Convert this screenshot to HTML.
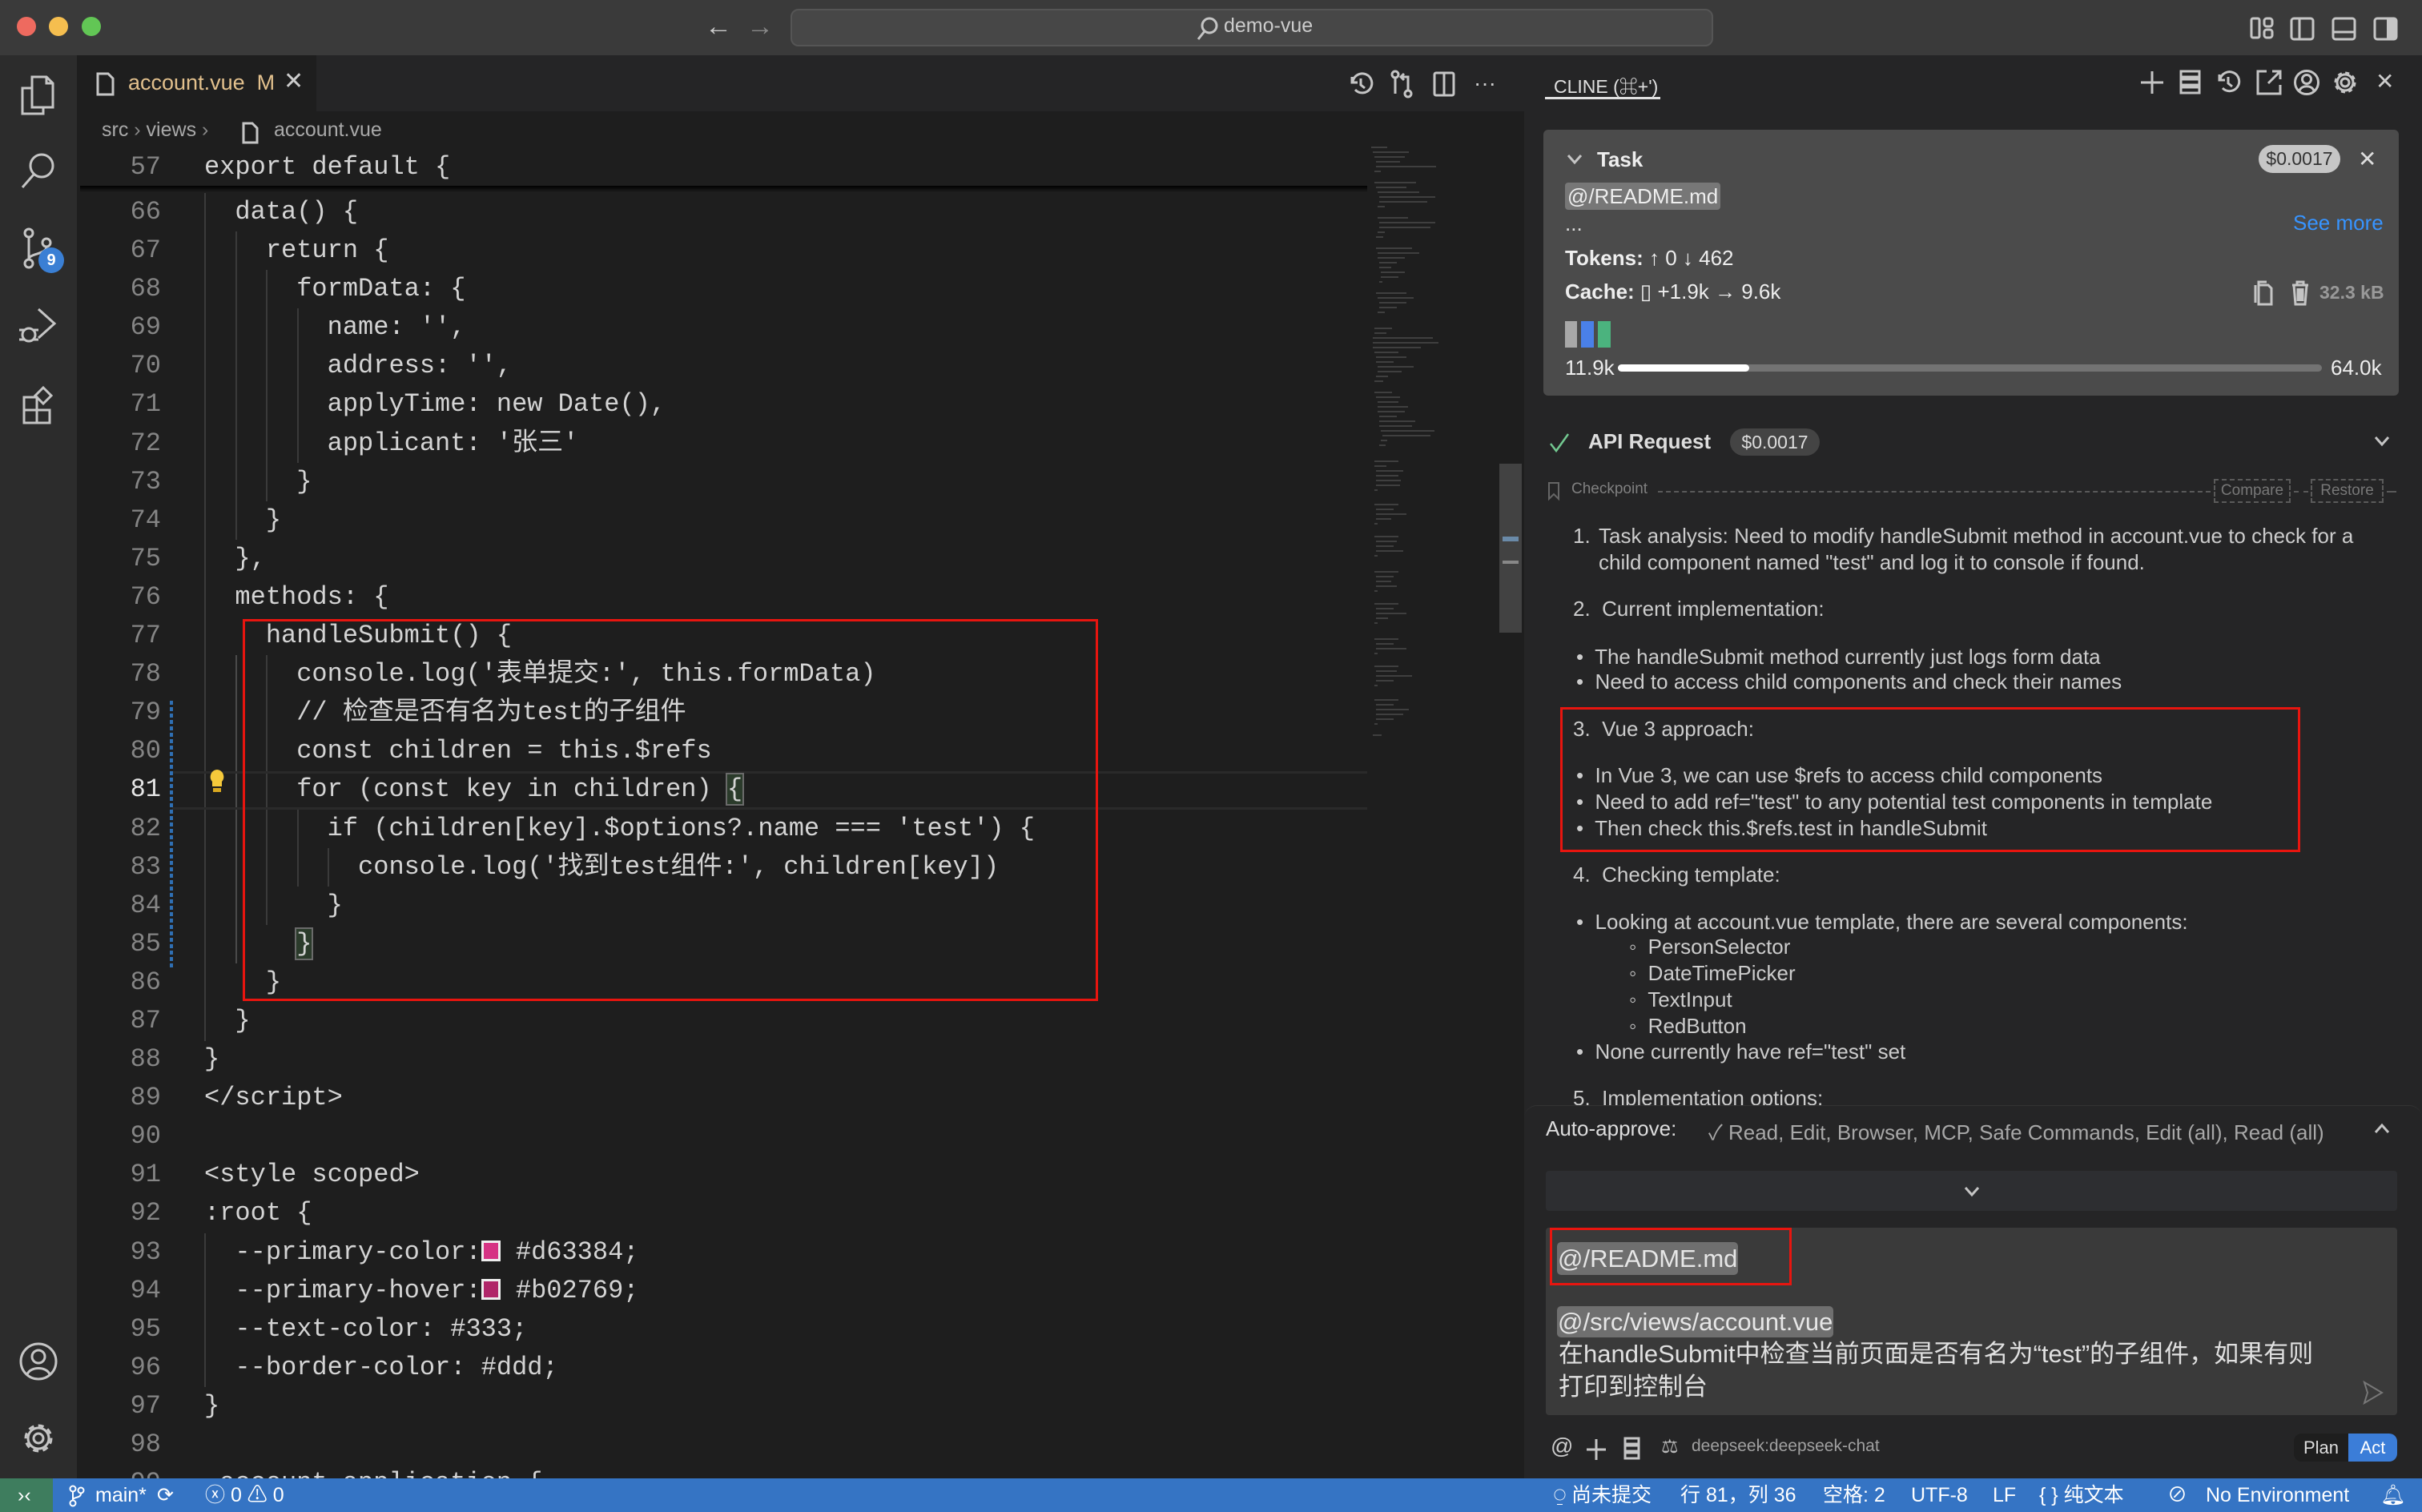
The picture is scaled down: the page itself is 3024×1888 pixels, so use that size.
<!DOCTYPE html>
<html><head><meta charset="utf-8">
<style>
*{margin:0;padding:0;box-sizing:border-box}
body{width:3024px;height:1888px;background:#1e1e1e;position:relative;overflow:hidden;font-family:"Liberation Sans","Noto Sans CJK SC",sans-serif;color:#ccc}
.a{position:absolute}
.code{font-family:"Liberation Mono","Noto Sans CJK SC",monospace;font-size:32px;color:#d4d4d4;white-space:pre;line-height:48.1px}
.ln{position:absolute;left:110px;width:91px;text-align:right;font-family:"Liberation Mono",monospace;font-size:32px;color:#858585;line-height:48.1px}
.guide{position:absolute;width:2px;background:#3a3a3a}
svg{position:absolute;overflow:visible}
.ic{stroke:#c5c5c5;fill:none;stroke-width:3}
.t26{font-size:26px;line-height:33px;color:#cccccc;position:absolute;white-space:nowrap}
.sb{position:absolute;top:1846px;height:42px;line-height:42px;font-size:25px;color:#fff;white-space:nowrap}
.mm{position:absolute;height:2px;background:#5a5a5a}
</style></head><body>

<!-- title bar -->
<div class="a" style="left:0;top:0;width:3024px;height:69px;background:#3a3a3a"></div>
<div class="a" style="left:21px;top:21px;width:24px;height:24px;border-radius:50%;background:#ee6a5f"></div>
<div class="a" style="left:61px;top:21px;width:24px;height:24px;border-radius:50%;background:#f5be4f"></div>
<div class="a" style="left:102px;top:21px;width:24px;height:24px;border-radius:50%;background:#62c655"></div>
<div class="a" style="left:880px;top:14px;font-size:34px;color:#ccc">←</div>
<div class="a" style="left:932px;top:14px;font-size:34px;color:#888">→</div>
<div class="a" style="left:987px;top:11px;width:1152px;height:47px;border:2px solid #555;border-radius:10px;background:#474747"></div>
<svg style="left:1492px;top:20px" width="30" height="30"><circle cx="18" cy="12" r="9" class="ic" stroke-width="2.5"/><path d="M12 19 L4 29" class="ic" stroke-width="2.5"/></svg>
<div class="a" style="left:1528px;top:18px;font-size:25px;color:#ccc">demo-vue</div>
<svg style="left:2810px;top:22px" width="30" height="28"><rect x="1" y="1" width="10" height="24" rx="2" class="ic" stroke-width="2.5"/><rect x="17" y="1" width="10" height="10" rx="3" class="ic" stroke-width="2.5"/><rect x="17" y="15" width="10" height="10" rx="3" class="ic" stroke-width="2.5"/></svg>
<svg style="left:2860px;top:22px" width="30" height="28"><rect x="1" y="1" width="27" height="26" rx="3" class="ic" stroke-width="2.5"/><path d="M11 1v26" class="ic" stroke-width="2.5"/></svg>
<svg style="left:2912px;top:22px" width="30" height="28"><rect x="1" y="1" width="27" height="26" rx="3" class="ic" stroke-width="2.5"/><path d="M1 18h27" class="ic" stroke-width="2.5"/></svg>
<svg style="left:2964px;top:22px" width="30" height="28"><rect x="1" y="1" width="27" height="26" rx="3" class="ic" stroke-width="2.5"/><rect x="16" y="1" width="12" height="26" fill="#c5c5c5"/></svg>

<!-- activity bar -->
<div class="a" style="left:0;top:69px;width:96px;height:1777px;background:#2c2c2c"></div>
<svg style="left:26px;top:94px" width="44" height="50"><path d="M14 2h18l8 8v30H14z M32 2v8h8 M14 16H2v32h26v-8" class="ic"/></svg>
<svg style="left:26px;top:190px" width="44" height="46"><circle cx="26" cy="17" r="14" class="ic"/><path d="M16 28 L2 44" class="ic"/></svg>
<svg style="left:28px;top:285px" width="44" height="50"><circle cx="8" cy="6" r="5" class="ic"/><circle cx="8" cy="44" r="5" class="ic"/><circle cx="30" cy="18" r="5" class="ic"/><path d="M8 11v28 M30 23c0 10-22 8-22 16" class="ic"/></svg>
<div class="a" style="left:48px;top:309px;width:32px;height:32px;border-radius:50%;background:#3a7fd4;color:#fff;font-size:20px;font-weight:bold;text-align:center;line-height:32px">9</div>
<svg style="left:22px;top:382px" width="50" height="50"><path d="M26 4 L46 22 L26 40" class="ic"/><circle cx="14" cy="36" r="8" class="ic"/><path d="M2 30h6 M2 42h6 M20 30h6 M20 42h6" class="ic"/></svg>
<svg style="left:28px;top:482px" width="44" height="46"><path d="M2 14h16v16H2z M2 30h16v16H2z M18 30h16v16H18z M26 2l10 10-10 10-10-10z" class="ic"/></svg>
<svg style="left:24px;top:1676px" width="50" height="50"><circle cx="24" cy="24" r="22" class="ic"/><circle cx="24" cy="18" r="8" class="ic"/><path d="M10 40c4-10 24-10 28 0" class="ic"/></svg>
<svg style="left:26px;top:1774px" width="46" height="46"><circle cx="22" cy="22" r="6" class="ic"/><circle cx="22" cy="22" r="16" class="ic" stroke-width="7" stroke-dasharray="7 5.5"/><circle cx="22" cy="22" r="13" class="ic"/></svg>

<!-- editor tab bar -->
<div class="a" style="left:96px;top:69px;width:1807px;height:70px;background:#252526"></div>
<div class="a" style="left:96px;top:69px;width:299px;height:70px;background:#1e1e1e"></div>
<svg style="left:120px;top:90px" width="24" height="30"><path d="M2 2h13l6 6v20H2z" class="ic" stroke-width="2.5"/></svg>
<div class="a" style="left:160px;top:88px;font-size:27px;color:#e2c08d">account.vue&nbsp; M</div>
<div class="a" style="left:354px;top:84px;font-size:30px;color:#ccc">✕</div>
<svg style="left:1684px;top:90px" width="30" height="30"><path d="M4 6v7h7" class="ic" stroke-width="2.5"/><path d="M5 12a12 12 0 1 1 3 10" class="ic" stroke-width="2.5"/><path d="M15 8v8l5 4" class="ic" stroke-width="2.5"/></svg>
<svg style="left:1736px;top:88px" width="30" height="34"><circle cx="6" cy="5" r="4" class="ic" stroke-width="2.5"/><circle cx="22" cy="29" r="4" class="ic" stroke-width="2.5"/><path d="M6 9v20 M22 25V8h-8 M17 4l-4 4 4 4" class="ic" stroke-width="2.5"/></svg>
<svg style="left:1790px;top:90px" width="28" height="30"><rect x="1" y="1" width="24" height="28" rx="2" class="ic" stroke-width="2.5"/><path d="M13 1v28" class="ic" stroke-width="2.5"/></svg>
<div class="a" style="left:1840px;top:88px;font-size:28px;color:#ccc">···</div>

<!-- breadcrumb -->
<div class="a" style="left:127px;top:148px;font-size:25px;color:#a9a9a9">src <span style="color:#888">›</span> views <span style="color:#888">›</span></div>
<svg style="left:302px;top:152px" width="22" height="28"><path d="M2 2h11l6 6v18H2z" class="ic" stroke-width="2.3"/></svg>
<div class="a" style="left:342px;top:148px;font-size:25px;color:#a9a9a9">account.vue</div>

<!-- sticky line -->
<div class="ln" style="top:185px">57</div>
<div class="a code" style="left:255px;top:185px">export default {</div>
<div class="a" style="left:100px;top:232px;width:1607px;height:8px;background:linear-gradient(#000,rgba(0,0,0,0))"></div>

<!-- indent guides -->
<div class="guide" style="left:255px;top:241px;height:1059px"></div>
<div class="guide" style="left:294px;top:289px;height:385px"></div>
<div class="guide" style="left:332px;top:337px;height:289px"></div>
<div class="guide" style="left:371px;top:385px;height:193px"></div>
<div class="guide" style="left:294px;top:818px;height:385px;background:#4a4a4a"></div>
<div class="guide" style="left:332px;top:818px;height:337px"></div>
<div class="guide" style="left:371px;top:1011px;height:96px"></div>
<div class="guide" style="left:409px;top:1059px;height:48px"></div>
<div class="guide" style="left:255px;top:1540px;height:192px"></div>

<!-- current line -->
<div class="a" style="left:215px;top:963px;width:1492px;height:48px;border-top:3px solid #2a2a2a;border-bottom:3px solid #2a2a2a"></div>

<!-- line numbers -->
<div class="ln" style="top:241px">66<br>67<br>68<br>69<br>70<br>71<br>72<br>73<br>74<br>75<br>76<br>77<br>78<br>79<br>80<br><span style="color:#e6e6e6">81</span><br>82<br>83<br>84<br>85<br>86<br>87<br>88<br>89<br>90<br>91<br>92<br>93<br>94<br>95<br>96<br>97<br>98<br>99</div>
<div class="a" style="left:212px;top:875px;width:4px;height:336px;background:repeating-linear-gradient(#2f6fb3 0 5px,transparent 5px 8px)"></div>
<svg style="left:260px;top:959px" width="22" height="34"><path d="M11 2a9 9 0 0 0-6 15v6h12v-6a9 9 0 0 0-6-15z" fill="#f5c93b"/><rect x="6" y="25" width="10" height="5" fill="#d8a820"/></svg>

<div class="a code" style="left:255px;top:241px">  data() {
    return {
      formData: {
        name: '',
        address: '',
        applyTime: new Date(),
        applicant: '张三'
      }
    }
  },
  methods: {
    handleSubmit() {
      console.log('表单提交:', this.formData)
      // 检查是否有名为test的子组件
      const children = this.$refs
      for (const key in children) <span style="outline:2px solid #6a6a6a;background:#2b3b2b">{</span>
        if (children[key].$options?.name === 'test') {
          console.log('找到test组件:', children[key])
        }
      <span style="outline:2px solid #6a6a6a;background:#2b3b2b">}</span>
    }
  }
}
&lt;/script&gt;

&lt;style scoped&gt;
:root {
  --primary-color:<span style="display:inline-block;width:24px;height:26px;background:#d63384;border:3px solid #eee;vertical-align:-3px"></span> #d63384;
  --primary-hover:<span style="display:inline-block;width:24px;height:26px;background:#b02769;border:3px solid #eee;vertical-align:-3px"></span> #b02769;
  --text-color: #333;
  --border-color: #ddd;
}

.account-application {</div>

<!-- red box editor -->
<div class="a" style="left:303px;top:773px;width:1068px;height:477px;border:3px solid #e8150f"></div>

<!-- minimap -->
<div class="a" style="left:1712px;top:183px;width:140px;height:940px;opacity:.55">
 <div class="mm" style="left:0;top:0;width:20px"></div><div class="mm" style="left:2px;top:6px;width:45px"></div><div class="mm" style="left:4px;top:12px;width:38px"></div><div class="mm" style="left:6px;top:18px;width:30px"></div><div class="mm" style="left:6px;top:24px;width:75px"></div><div class="mm" style="left:4px;top:30px;width:8px"></div>
 <div class="mm" style="left:4px;top:44px;width:52px"></div><div class="mm" style="left:6px;top:50px;width:38px"></div><div class="mm" style="left:8px;top:56px;width:52px"></div><div class="mm" style="left:10px;top:62px;width:70px"></div><div class="mm" style="left:10px;top:68px;width:60px"></div><div class="mm" style="left:8px;top:74px;width:9px"></div>
 <div class="mm" style="left:8px;top:88px;width:38px"></div><div class="mm" style="left:10px;top:94px;width:70px"></div><div class="mm" style="left:10px;top:100px;width:64px"></div><div class="mm" style="left:8px;top:106px;width:9px"></div><div class="mm" style="left:6px;top:112px;width:9px"></div>
 <div class="mm" style="left:6px;top:126px;width:45px"></div><div class="mm" style="left:8px;top:132px;width:52px"></div><div class="mm" style="left:8px;top:138px;width:34px"></div><div class="mm" style="left:10px;top:144px;width:22px"></div><div class="mm" style="left:10px;top:150px;width:15px"></div><div class="mm" style="left:12px;top:156px;width:30px"></div><div class="mm" style="left:12px;top:162px;width:22px"></div><div class="mm" style="left:10px;top:168px;width:4px"></div>
 <div class="mm" style="left:6px;top:182px;width:38px"></div><div class="mm" style="left:8px;top:188px;width:45px"></div><div class="mm" style="left:10px;top:194px;width:34px"></div><div class="mm" style="left:10px;top:200px;width:22px"></div><div class="mm" style="left:8px;top:206px;width:9px"></div>
 <div class="mm" style="left:4px;top:226px;width:22px"></div><div class="mm" style="left:4px;top:232px;width:15px"></div><div class="mm" style="left:2px;top:238px;width:75px"></div><div class="mm" style="left:2px;top:244px;width:82px"></div><div class="mm" style="left:2px;top:250px;width:60px"></div><div class="mm" style="left:4px;top:256px;width:30px"></div><div class="mm" style="left:6px;top:262px;width:38px"></div><div class="mm" style="left:6px;top:268px;width:22px"></div><div class="mm" style="left:8px;top:274px;width:45px"></div><div class="mm" style="left:8px;top:280px;width:30px"></div><div class="mm" style="left:6px;top:286px;width:15px"></div><div class="mm" style="left:4px;top:292px;width:11px"></div>
 <div class="mm" style="left:4px;top:306px;width:22px"></div><div class="mm" style="left:6px;top:312px;width:30px"></div><div class="mm" style="left:8px;top:318px;width:26px"></div><div class="mm" style="left:8px;top:324px;width:38px"></div><div class="mm" style="left:8px;top:330px;width:34px"></div><div class="mm" style="left:10px;top:336px;width:22px"></div><div class="mm" style="left:10px;top:342px;width:45px"></div><div class="mm" style="left:10px;top:348px;width:41px"></div><div class="mm" style="left:12px;top:354px;width:67px"></div><div class="mm" style="left:14px;top:360px;width:60px"></div><div class="mm" style="left:12px;top:366px;width:8px"></div><div class="mm" style="left:10px;top:372px;width:8px"></div>
 <div class="mm" style="left:4px;top:392px;width:30px"></div><div class="mm" style="left:4px;top:398px;width:15px"></div><div class="mm" style="left:6px;top:404px;width:34px"></div><div class="mm" style="left:6px;top:410px;width:28px"></div><div class="mm" style="left:6px;top:416px;width:31px"></div><div class="mm" style="left:6px;top:422px;width:30px"></div><div class="mm" style="left:4px;top:428px;width:4px"></div>
 <div class="mm" style="left:4px;top:446px;width:30px"></div><div class="mm" style="left:6px;top:452px;width:22px"></div><div class="mm" style="left:6px;top:458px;width:38px"></div><div class="mm" style="left:6px;top:464px;width:19px"></div><div class="mm" style="left:4px;top:470px;width:4px"></div><div class="mm" style="left:4px;top:486px;width:30px"></div><div class="mm" style="left:6px;top:492px;width:26px"></div><div class="mm" style="left:6px;top:498px;width:22px"></div><div class="mm" style="left:6px;top:504px;width:34px"></div><div class="mm" style="left:4px;top:510px;width:4px"></div>
 <div class="mm" style="left:4px;top:530px;width:30px"></div><div class="mm" style="left:6px;top:536px;width:22px"></div><div class="mm" style="left:6px;top:542px;width:19px"></div><div class="mm" style="left:6px;top:548px;width:26px"></div><div class="mm" style="left:4px;top:554px;width:4px"></div><div class="mm" style="left:4px;top:570px;width:30px"></div><div class="mm" style="left:6px;top:576px;width:22px"></div><div class="mm" style="left:6px;top:582px;width:38px"></div><div class="mm" style="left:6px;top:588px;width:15px"></div><div class="mm" style="left:4px;top:594px;width:4px"></div>
 <div class="mm" style="left:4px;top:614px;width:30px"></div><div class="mm" style="left:6px;top:620px;width:22px"></div><div class="mm" style="left:6px;top:626px;width:38px"></div><div class="mm" style="left:4px;top:632px;width:4px"></div><div class="mm" style="left:4px;top:648px;width:30px"></div><div class="mm" style="left:6px;top:654px;width:26px"></div><div class="mm" style="left:6px;top:660px;width:45px"></div><div class="mm" style="left:6px;top:666px;width:22px"></div><div class="mm" style="left:4px;top:672px;width:4px"></div>
 <div class="mm" style="left:4px;top:690px;width:30px"></div><div class="mm" style="left:6px;top:696px;width:22px"></div><div class="mm" style="left:6px;top:702px;width:41px"></div><div class="mm" style="left:6px;top:708px;width:34px"></div><div class="mm" style="left:6px;top:714px;width:22px"></div><div class="mm" style="left:4px;top:720px;width:4px"></div><div class="mm" style="left:2px;top:734px;width:11px"></div>
</div>
<div class="a" style="left:1872px;top:579px;width:28px;height:211px;background:#424242"></div>
<div class="a" style="left:1876px;top:670px;width:20px;height:6px;background:#6a8aa8"></div>
<div class="a" style="left:1876px;top:700px;width:20px;height:4px;background:#888"></div>

<!-- right panel -->
<div class="a" style="left:1903px;top:69px;width:1121px;height:1777px;background:#252526"></div>
<div class="a" style="left:1940px;top:89px;font-size:23px;color:#e0e0e0">CLINE (⌘+')</div>
<div class="a" style="left:1929px;top:121px;width:144px;height:3px;background:#e0e0e0"></div>
<svg style="left:2672px;top:88px" width="30" height="30"><path d="M15 1v28 M1 15h28" class="ic" stroke-width="2.5"/></svg>
<svg style="left:2722px;top:88px" width="26" height="30"><rect x="1" y="1" width="23" height="7" class="ic" stroke-width="2.5"/><rect x="1" y="11" width="23" height="7" class="ic" stroke-width="2.5"/><rect x="1" y="21" width="23" height="7" class="ic" stroke-width="2.5"/></svg>
<svg style="left:2768px;top:88px" width="30" height="30"><path d="M3 5v7h7" class="ic" stroke-width="2.5"/><path d="M4 11a12 12 0 1 1 3 11" class="ic" stroke-width="2.5"/><path d="M14 8v8l5 4" class="ic" stroke-width="2.5"/></svg>
<svg style="left:2818px;top:88px" width="30" height="30"><path d="M12 1H1v28h28V18 M14 16L29 1 M19 1h10v10" class="ic" stroke-width="2.5"/></svg>
<svg style="left:2864px;top:87px" width="32" height="32"><circle cx="16" cy="16" r="14.5" class="ic" stroke-width="2.5"/><circle cx="16" cy="12" r="5.5" class="ic" stroke-width="2.5"/><path d="M7 26c3-7 15-7 18 0" class="ic" stroke-width="2.5"/></svg>
<svg style="left:2912px;top:87px" width="32" height="32"><circle cx="16" cy="16" r="5" class="ic" stroke-width="2.5"/><circle cx="16" cy="16" r="12" class="ic" stroke-width="5" stroke-dasharray="5 4.4"/><circle cx="16" cy="16" r="10" class="ic" stroke-width="2.5"/></svg>
<div class="a" style="left:2966px;top:85px;font-size:28px;color:#ccc">✕</div>

<!-- task box -->
<div class="a" style="left:1927px;top:162px;width:1068px;height:332px;background:#4b4b4b;border-radius:6px"></div>
<svg style="left:1956px;top:192px" width="20" height="14"><path d="M2 2l8 9 8-9" class="ic" stroke-width="2.5"/></svg>
<div class="a" style="left:1994px;top:184px;font-size:26px;font-weight:bold;color:#eee">Task</div>
<div class="a" style="left:2820px;top:181px;width:102px;height:35px;border-radius:18px;background:#c6c6c6;color:#333;font-size:23px;line-height:35px;text-align:center">$0.0017</div>
<div class="a" style="left:2944px;top:182px;font-size:28px;color:#ddd">✕</div>
<div class="a" style="left:1954px;top:228px;height:34px;padding:0 3px;background:#777;border-radius:4px;font-size:26px;line-height:34px;color:#eee">@/README.md</div>
<div class="a" style="left:1954px;top:264px;font-size:26px;color:#ddd">...</div>
<div class="a" style="left:2863px;top:263px;font-size:26px;color:#3794ff">See more</div>
<div class="a" style="left:1954px;top:307px;font-size:26px;color:#eee"><b>Tokens:</b> ↑ 0 ↓ 462</div>
<div class="a" style="left:1954px;top:349px;font-size:26px;color:#eee"><b>Cache:</b> ▯ +1.9k → 9.6k</div>
<svg style="left:2814px;top:350px" width="24" height="32"><path d="M6 6h12l4 4v20H6z M6 6V2h10 M2 6v22" class="ic" stroke="#999" stroke-width="2"/></svg>
<svg style="left:2860px;top:350px" width="24" height="32"><path d="M2 6h20 M8 6V2h8v4 M4 6l2 24h12l2-24 M9 10v16 M12 10v16 M15 10v16" class="ic" stroke="#999" stroke-width="2"/></svg>
<div class="a" style="left:2896px;top:352px;font-size:23px;font-weight:bold;color:#999">32.3 kB</div>
<div class="a" style="left:1954px;top:401px;width:15px;height:33px;background:#a8a8a8"></div>
<div class="a" style="left:1974px;top:401px;width:16px;height:33px;background:#4a80e8"></div>
<div class="a" style="left:1995px;top:401px;width:16px;height:33px;background:#4bb37e"></div>
<div class="a" style="left:1954px;top:444px;font-size:26px;color:#eee">11.9k</div>
<div class="a" style="left:2020px;top:455px;width:879px;height:9px;border-radius:5px;background:#737373"></div>
<div class="a" style="left:2020px;top:455px;width:164px;height:9px;border-radius:5px;background:#fff"></div>
<div class="a" style="left:2910px;top:444px;font-size:26px;color:#eee">64.0k</div>

<!-- API request -->
<svg style="left:1934px;top:540px" width="26" height="26"><path d="M2 14l7 9L24 2" fill="none" stroke="#73c991" stroke-width="2.5"/></svg>
<div class="a" style="left:1983px;top:536px;font-size:26px;font-weight:bold;color:#ddd">API Request</div>
<div class="a" style="left:2160px;top:535px;width:112px;height:34px;border-radius:17px;background:#444;color:#ddd;font-size:23px;line-height:34px;text-align:center">$0.0017</div>
<svg style="left:2964px;top:544px" width="20" height="14"><path d="M2 2l8 9 8-9" class="ic" stroke-width="2.5"/></svg>
<svg style="left:1932px;top:601px" width="16" height="24"><path d="M2 2h12v20l-6-6-6 6z" fill="none" stroke="#666" stroke-width="2"/></svg>
<div class="a" style="left:1962px;top:600px;font-size:19px;color:#808080">Checkpoint</div>
<div class="a" style="left:2070px;top:613px;width:690px;border-top:2px dashed #5a5a5a"></div>
<div class="a" style="left:2764px;top:598px;width:96px;height:30px;border:2px dashed #5a5a5a;font-size:19px;color:#777;text-align:center;line-height:26px">Compare</div>
<div class="a" style="left:2864px;top:613px;width:18px;border-top:2px dashed #5a5a5a"></div>
<div class="a" style="left:2885px;top:598px;width:91px;height:30px;border:2px dashed #5a5a5a;font-size:19px;color:#777;text-align:center;line-height:26px">Restore</div>
<div class="a" style="left:2980px;top:613px;width:12px;border-top:2px dashed #5a5a5a"></div>

<!-- message list -->
<div class="t26" style="left:1964px;top:653px">1.</div>
<div class="t26" style="left:1996px;top:653px">Task analysis: Need to modify handleSubmit method in account.vue to check for a</div>
<div class="t26" style="left:1996px;top:686px">child component named "test" and log it to console if found.</div>
<div class="t26" style="left:1964px;top:744px">2.&nbsp; Current implementation:</div>
<div class="t26" style="left:1968px;top:804px">•&nbsp; The handleSubmit method currently just logs form data</div>
<div class="t26" style="left:1968px;top:835px">•&nbsp; Need to access child components and check their names</div>
<div class="t26" style="left:1964px;top:894px">3.&nbsp; Vue 3 approach:</div>
<div class="t26" style="left:1968px;top:952px">•&nbsp; In Vue 3, we can use $refs to access child components</div>
<div class="t26" style="left:1968px;top:985px">•&nbsp; Need to add ref="test" to any potential test components in template</div>
<div class="t26" style="left:1968px;top:1018px">•&nbsp; Then check this.$refs.test in handleSubmit</div>
<div class="t26" style="left:1964px;top:1076px">4.&nbsp; Checking template:</div>
<div class="t26" style="left:1968px;top:1135px">•&nbsp; Looking at account.vue template, there are several components:</div>
<div class="t26" style="left:2034px;top:1166px">◦&nbsp; PersonSelector</div>
<div class="t26" style="left:2034px;top:1199px">◦&nbsp; DateTimePicker</div>
<div class="t26" style="left:2034px;top:1232px">◦&nbsp; TextInput</div>
<div class="t26" style="left:2034px;top:1265px">◦&nbsp; RedButton</div>
<div class="t26" style="left:1968px;top:1297px">•&nbsp; None currently have ref="test" set</div>
<div class="t26" style="left:1964px;top:1355px">5.&nbsp; Implementation options:</div>
<div class="a" style="left:1948px;top:883px;width:924px;height:181px;border:3px solid #e8150f"></div>

<!-- bottom area -->
<div class="a" style="left:1903px;top:1380px;width:1121px;height:466px;background:#252526;border-top:1px solid #333;border-radius:16px 16px 0 0"></div>
<div class="a" style="left:1930px;top:1394px;font-size:26px;color:#ddd;white-space:nowrap">Auto-approve:</div>
<div class="a" style="left:2133px;top:1394px;font-size:26px;color:#a8a8a8;white-space:nowrap">✓ Read, Edit, Browser, MCP, Safe Commands, Edit (all), Read (all)</div>
<svg style="left:2964px;top:1402px" width="20" height="14"><path d="M2 12l8-9 8 9" class="ic" stroke-width="2.5"/></svg>
<div class="a" style="left:1930px;top:1462px;width:1063px;height:50px;background:#2d2e31;border-radius:4px"></div>
<svg style="left:2452px;top:1481px" width="20" height="14"><path d="M2 2l8 9 8-9" class="ic" stroke-width="2.5"/></svg>
<div class="a" style="left:1930px;top:1533px;width:1063px;height:234px;background:#3a3a3a;border-radius:4px"></div>
<div class="a" style="left:1944px;top:1551px;height:41px;padding:0 1px;background:#6f6f6f;border-radius:5px;font-size:31px;line-height:41px;color:#e6e6e6">@/README.md</div>
<div class="a" style="left:1935px;top:1533px;width:302px;height:72px;border:3px solid #e8150f"></div>
<div class="a" style="left:1944px;top:1631px;height:39px;padding:0 1px;background:#6f6f6f;border-radius:5px;font-size:31px;line-height:39px;color:#e6e6e6">@/src/views/account.vue</div>
<div class="a" style="left:1946px;top:1670px;font-size:31px;line-height:41px;color:#e0e0e0;white-space:nowrap">在handleSubmit中检查当前页面是否有名为“test”的子组件，如果有则<br>打印到控制台</div>
<svg style="left:2950px;top:1724px" width="26" height="30"><path d="M2 2l22 13L2 28l4-13z" fill="none" stroke="#777" stroke-width="2"/></svg>

<div class="a" style="left:1936px;top:1790px;font-size:28px;color:#ccc">@</div>
<svg style="left:1980px;top:1796px" width="26" height="28"><path d="M13 1v26 M1 14h24" class="ic" stroke-width="2.5"/></svg>
<svg style="left:2028px;top:1795px" width="20" height="28"><rect x="1" y="1" width="17" height="7" class="ic" stroke-width="2.2"/><rect x="1" y="10" width="17" height="7" class="ic" stroke-width="2.2"/><rect x="1" y="19" width="17" height="7" class="ic" stroke-width="2.2"/></svg>
<div class="a" style="left:2074px;top:1792px;font-size:24px;color:#bbb">⚖</div>
<div class="a" style="left:2112px;top:1794px;font-size:21px;color:#a0a0a0">deepseek:deepseek-chat</div>
<div class="a" style="left:2864px;top:1790px;width:129px;height:35px;border-radius:10px;background:#1e1e1e;overflow:hidden">
 <div class="a" style="left:0;top:0;width:68px;height:35px;color:#ddd;font-size:22px;line-height:35px;text-align:center">Plan</div>
 <div class="a" style="left:68px;top:0;width:61px;height:35px;background:#3b7dd8;color:#fff;font-size:22px;line-height:35px;text-align:center">Act</div>
</div>

<!-- status bar -->
<div class="a" style="left:0;top:1846px;width:3024px;height:42px;background:#3574c4"></div>
<div class="a" style="left:0;top:1846px;width:66px;height:42px;background:#3e7d5e"></div>
<div class="sb" style="left:22px">›‹</div>
<svg style="left:86px;top:1854px" width="20" height="28"><circle cx="5" cy="5" r="3.5" stroke="#fff" fill="none" stroke-width="2"/><circle cx="5" cy="23" r="3.5" stroke="#fff" fill="none" stroke-width="2"/><circle cx="15" cy="7" r="3.5" stroke="#fff" fill="none" stroke-width="2"/><path d="M5 9v10 M15 11c0 6-10 4-10 8" stroke="#fff" fill="none" stroke-width="2"/></svg>
<div class="sb" style="left:119px">main*</div>
<div class="sb" style="left:196px">⟳</div>
<div class="sb" style="left:256px">ⓧ 0 ⚠ 0</div>
<div class="sb" style="left:1940px">⍜ 尚未提交</div>
<div class="sb" style="left:2098px">行 81，列 36</div>
<div class="sb" style="left:2276px">空格: 2</div>
<div class="sb" style="left:2386px">UTF-8</div>
<div class="sb" style="left:2488px">LF</div>
<div class="sb" style="left:2546px">{ } 纯文本</div>
<div class="sb" style="left:2706px">⊘</div>
<div class="sb" style="left:2754px">No Environment</div>
<div class="sb" style="left:2972px">🔔︎</div>
</body></html>
